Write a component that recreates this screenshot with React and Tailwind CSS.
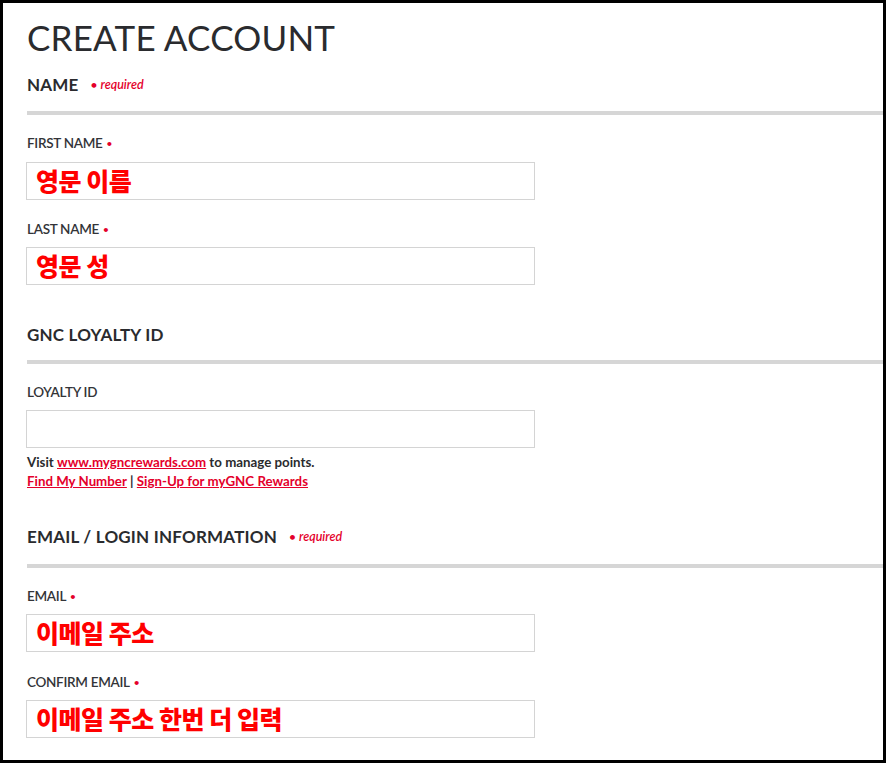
function Req({ className = '' }) {
  return (
    <span className={`ml-3 flex items-center text-[12.5px] italic font-semibold text-[#e4002b] ${className}`}>
      <span className="mr-[3px] text-[12px] not-italic">•</span>required
    </span>
  );
}

function SectionHeading({ title, required, className = '' }) {
  return (
    <div className={className}>
      <div className="flex h-[28px] items-center">
        <h2 className="text-[17px] font-bold tracking-[0.2px] text-[#2a2b2e]">{title}</h2>
        {required && <Req />}
      </div>
    </div>
  );
}

function Divider({ className = '' }) {
  return <div className={`h-[4px] bg-[#d6d6d6] ${className}`} />;
}

function Label({ text, required, className = '' }) {
  return (
    <div className={`flex h-[20px] items-center text-[13.5px] font-semibold tracking-[-0.3px] text-[#333438] ${className}`}>
      {text}
      {required && <span className="ml-[4px] text-[10px] text-[#e4002b]">•</span>}
    </div>
  );
}

function Field({ value, className = '' }) {
  return (
    <div
      className={`-ml-px flex h-[38px] w-[509px] items-center border border-[#d4d4d4] bg-white pl-[9px] text-[25px] font-black tracking-[-0.5px] text-[#ff0000] ${className}`}
      style={{ fontFamily: '"Noto Sans CJK KR", "Noto Sans", sans-serif' }}
    >
      {value}
    </div>
  );
}

export default function App() {
  return (
    <div
      className="h-[763px] w-[886px] overflow-hidden border-[3px] border-black bg-white pl-6"
      style={{ fontFamily: 'Lato, "Noto Sans", sans-serif' }}
    >
      <div className="flex h-[68px] items-center">
        <h1 className="text-[35px] font-normal leading-none tracking-[0.2px] text-[#2a2b2e]">CREATE ACCOUNT</h1>
      </div>

      <SectionHeading title="NAME" required />
      <Divider className="mt-[12px]" />
      <Label text="FIRST NAME" required className="mt-[18px]" />
      <Field value="영문 이름" className="mt-[9px]" />
      <Label text="LAST NAME" required className="mt-[19px]" />
      <Field value="영문 성" className="mt-[8px]" />

      <SectionHeading title="GNC LOYALTY ID" className="mt-[36px]" />
      <Divider className="mt-[11px]" />
      <Label text="LOYALTY ID" className="mt-[18px]" />
      <Field value="" className="mt-[8px]" />
      <div className="mt-[6px] flex h-[18px] items-center text-[13.3px] font-bold text-[#2a2b2e]">
        Visit&nbsp;<a href="#" className="text-[#e4002b] underline">www.mygncrewards.com</a>&nbsp;to manage points.
      </div>
      <div className="mt-[1px] flex h-[18px] items-center text-[13.3px] font-bold text-[#2a2b2e]">
        <a href="#" className="text-[#e4002b] underline">Find My Number</a>&nbsp;|&nbsp;
        <a href="#" className="text-[#e4002b] underline">Sign-Up for myGNC Rewards</a>
      </div>

      <SectionHeading title="EMAIL / LOGIN INFORMATION" required className="mt-[32px]" />
      <Divider className="mt-[13px]" />
      <Label text="EMAIL" required className="mt-[18px]" />
      <Field value="이메일 주소" className="mt-[8px]" />
      <Label text="CONFIRM EMAIL" required className="mt-[20px]" />
      <Field value="이메일 주소 한번 더 입력" className="mt-[8px]" />
    </div>
  );
}
